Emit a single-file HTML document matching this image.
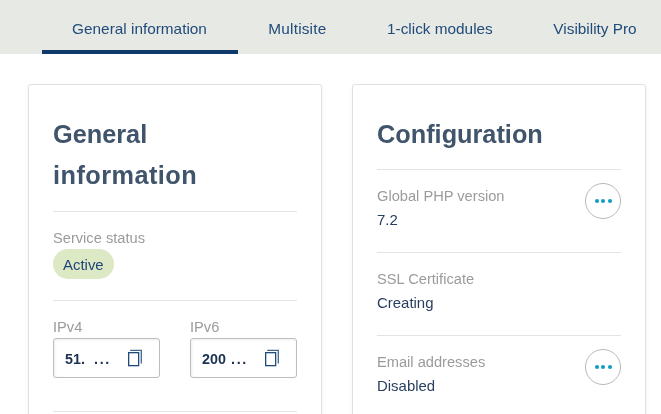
<!DOCTYPE html>
<html><head><meta charset="utf-8">
<style>
html,body{margin:0;padding:0;}
body{width:661px;height:414px;overflow:hidden;position:relative;background:#fff;font-family:"Liberation Sans",sans-serif;}
.hdr{position:absolute;left:0;top:0;width:661px;height:54px;background:#e7e9e5;}
.tab{position:absolute;top:0;height:54px;white-space:nowrap;font-size:15.35px;color:#214b79;line-height:1;will-change:transform;}
.tab span{position:absolute;top:21px;transform:translateX(-50%);}
.ul{position:absolute;left:42px;top:50px;width:196px;height:4px;background:#0f3968;}
.card{position:absolute;top:84px;height:360px;border:1px solid #dfe0e4;border-radius:3px;background:#fff;box-sizing:border-box;box-shadow:0 2px 5px rgba(0,0,0,0.05);}
.t{position:absolute;white-space:nowrap;line-height:1;will-change:transform;}
.title{font-weight:bold;font-size:25.3px;color:#40546b;}
.lbl{font-size:14.65px;color:#9b9b9b;}
.val{font-size:14.95px;color:#283f60;}
.hr{position:absolute;height:1px;background:#e3e3e3;}
.pill{position:absolute;left:53px;top:249px;width:61px;height:30px;border-radius:15px;background:#dde8c5;}
.inp{position:absolute;top:338px;width:107px;height:40px;border:1px solid #bdbdbd;border-radius:3px;box-sizing:border-box;box-shadow:inset 1px 1px 3px rgba(0,0,0,0.07);}
.ipt{font-weight:bold;font-size:14.3px;color:#1a3152;}
.dots{letter-spacing:1.7px;}
.more{position:absolute;left:585px;width:36px;height:36px;border:1px solid #b8b8b8;border-radius:50%;box-sizing:border-box;}
.more i{position:absolute;top:15px;width:4px;height:4px;border-radius:50%;background:#0e9cc2;}
</style></head><body>
<div class="hdr"></div>
<div class="tab"><span style="left:139.5px">General information</span></div>
<div class="tab"><span style="left:297.4px;letter-spacing:0.2px">Multisite</span></div>
<div class="tab"><span style="left:439.9px">1-click modules</span></div>
<div class="tab"><span style="left:595px">Visibility Pro</span></div>
<div class="ul"></div>

<div class="card" style="left:28px;width:294px;"></div>
<div class="card" style="left:352px;width:294px;"></div>

<!-- left card -->
<div class="t title" style="left:53px;top:121.5px">General</div>
<div class="t title" style="left:53px;top:163px;letter-spacing:0.45px">information</div>
<div class="hr" style="left:53px;top:211px;width:244px"></div>
<div class="t lbl" style="left:53px;top:231px">Service status</div>
<div class="pill"></div>
<div class="t val" style="left:63px;top:258px;color:#1f4677">Active</div>
<div class="hr" style="left:53px;top:300px;width:244px"></div>
<div class="t lbl" style="left:53px;top:320px">IPv4</div>
<div class="t lbl" style="left:190px;top:320px">IPv6</div>
<div class="inp" style="left:53px"></div>
<div class="inp" style="left:190px"></div>
<div class="t ipt" style="left:65px;top:351.5px">51.</div><div class="t ipt dots" style="left:94px;top:351.5px">...</div>
<div class="t ipt" style="left:202px;top:351.5px">200</div><div class="t ipt dots" style="left:231px;top:351.5px">...</div>
<svg style="position:absolute;left:126px;top:349px" width="18" height="18" viewBox="0 0 18 18"><rect x="2.65" y="3.65" width="10" height="13" fill="none" stroke="#1f4a7a" stroke-width="1.3"/><path d="M4.2 1.4H15.3V14.4" fill="none" stroke="#1f4a7a" stroke-width="1.3" opacity="0.85"/></svg>
<svg style="position:absolute;left:263px;top:349px" width="18" height="18" viewBox="0 0 18 18"><rect x="2.65" y="3.65" width="10" height="13" fill="none" stroke="#1f4a7a" stroke-width="1.3"/><path d="M4.2 1.4H15.3V14.4" fill="none" stroke="#1f4a7a" stroke-width="1.3" opacity="0.85"/></svg>
<div class="hr" style="left:53px;top:411px;width:244px"></div>

<!-- right card -->
<div class="t title" style="left:377px;top:121.5px">Configuration</div>
<div class="hr" style="left:377px;top:169px;width:244px"></div>
<div class="t lbl" style="left:377px;top:189px">Global PHP version</div>
<div class="t val" style="left:377px;top:213px">7.2</div>
<div class="more" style="top:183px"><i style="left:8.6px"></i><i style="left:15.1px"></i><i style="left:21.6px"></i></div>
<div class="hr" style="left:377px;top:252px;width:244px"></div>
<div class="t lbl" style="left:377px;top:272px">SSL Certificate</div>
<div class="t val" style="left:377px;top:296px">Creating</div>
<div class="hr" style="left:377px;top:335px;width:244px"></div>
<div class="t lbl" style="left:377px;top:355px">Email addresses</div>
<div class="t val" style="left:377px;top:379px">Disabled</div>
<div class="more" style="top:349px"><i style="left:8.6px"></i><i style="left:15.1px"></i><i style="left:21.6px"></i></div>
</body></html>
